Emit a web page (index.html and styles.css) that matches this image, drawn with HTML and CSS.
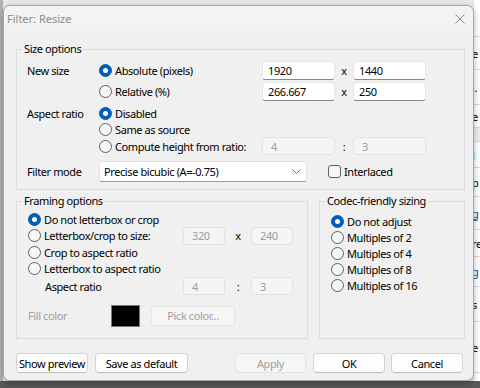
FILE: index.html
```html
<!DOCTYPE html>
<html lang="en">
<head>
    <meta charset="UTF-8">
    <meta name="viewport" content="width=device-width, initial-scale=1.0">
    <title>Filter: Resize</title>
    <link rel="stylesheet" href="styles.css">
</head>
<body>

    <div class="screen">
        <div class="desk">
            <div class="edge-left"></div>

            <div class="dialog">
                <div class="titlebar">
                    <span class="title">Filter: Resize</span>
                    <svg class="close" width="10" height="10" viewBox="0 0 10 10">
                        <path d="M0.5 0.5 L9.5 9.5 M9.5 0.5 L0.5 9.5" stroke="#8a8a8a" stroke-width="1" fill="none"/>
                    </svg>
                </div>

                <div class="body">
                    <!-- Size options -->
                    <fieldset class="group">
                        <legend>Size options</legend>
                        <div class="inner size-inner">
                            <div class="row h21">
                                <span class="label">New size</span>
                                <span class="opt"><span class="radio on"></span>Absolute (pixels)</span>
                                <span class="field">1920</span><span class="sep">x</span><span class="field">1440</span>
                            </div>
                            <div class="row h21">
                                <span class="label"></span>
                                <span class="opt"><span class="radio"></span>Relative (%)</span>
                                <span class="field">266.667</span><span class="sep">x</span><span class="field">250</span>
                            </div>
                            <div class="row h16 mt3">
                                <span class="label">Aspect ratio</span>
                                <span class="opt"><span class="radio on"></span>Disabled</span>
                            </div>
                            <div class="row h16">
                                <span class="label"></span>
                                <span class="opt"><span class="radio"></span>Same as source</span>
                            </div>
                            <div class="row h18">
                                <span class="label"></span>
                                <span class="opt"><span class="radio"></span>Compute height from ratio:</span>
                                <span class="field off short">4</span><span class="sep">:</span><span class="field off short">3</span>
                            </div>
                            <div class="row h23 mt5">
                                <span class="label">Filter mode</span>
                                <span class="select">Precise bicubic (A=-0.75)
                                    <svg width="9" height="5" viewBox="0 0 9 5"><path d="M0.5 0.5 L4.5 4.5 L8.5 0.5" stroke="#6b6b6b" fill="none"/></svg>
                                </span>
                                <span class="check-opt"><span class="checkbox"></span>Interlaced</span>
                            </div>
                        </div>
                    </fieldset>

                    <div class="lower">
                        <!-- Framing options -->
                        <fieldset class="group framing">
                            <legend>Framing options</legend>
                            <div class="inner framing-inner">
                                <div class="row h16">
                                    <span class="opt-f"><span class="radio on"></span>Do not letterbox or crop</span>
                                </div>
                                <div class="row h17">
                                    <span class="opt-f"><span class="radio"></span>Letterbox/crop to size:</span>
                                    <span class="field off small">320</span><span class="sep wide">x</span><span class="field off small">240</span>
                                </div>
                                <div class="row h16">
                                    <span class="opt-f"><span class="radio"></span>Crop to aspect ratio</span>
                                </div>
                                <div class="row h16">
                                    <span class="opt-f"><span class="radio"></span>Letterbox to aspect ratio</span>
                                </div>
                                <div class="row h18 mt1">
                                    <span class="sub-label">Aspect ratio</span>
                                    <span class="field off small">4</span><span class="sep wide">:</span><span class="field off small">3</span>
                                </div>
                                <div class="row h23 mt9">
                                    <span class="fill-label">Fill color</span>
                                    <span class="swatch"></span>
                                    <span class="btn off pick">Pick color...</span>
                                </div>
                            </div>
                        </fieldset>

                        <!-- Codec-friendly sizing -->
                        <fieldset class="group codec">
                            <legend>Codec-friendly sizing</legend>
                            <div class="inner codec-inner">
                                <div class="row h16"><span class="radio on"></span>Do not adjust</div>
                                <div class="row h16"><span class="radio"></span>Multiples of 2</div>
                                <div class="row h16"><span class="radio"></span>Multiples of 4</div>
                                <div class="row h16"><span class="radio"></span>Multiples of 8</div>
                                <div class="row h16"><span class="radio"></span>Multiples of 16</div>
                            </div>
                        </fieldset>
                    </div>

                    <div class="buttons">
                        <span class="btn w72">Show preview</span>
                        <span class="btn w93">Save as default</span>
                        <span class="btn off w71 push">Apply</span>
                        <span class="btn w72">OK</span>
                        <span class="btn w72">Cancel</span>
                    </div>
                </div>
            </div>

            <!-- Fenster im Hintergrund -->
            <div class="backwin">
                <div class="bw-row" style="height: 37px"></div>
                <div class="bw-row" style="height: 33px">e</div>
                <div class="bw-row" style="height: 35px">..</div>
                <div class="bw-row" style="height: 23px">e</div>
                <div class="bw-row band" style="height: 14px"></div>
                <div class="bw-row" style="height: 26px">J</div>
                <div class="bw-row" style="height: 29px">p</div>
                <div class="bw-row link" style="height: 33px">g</div>
                <div class="bw-row" style="height: 27px">re</div>
                <div class="bw-row link" style="height: 30px">g</div>
                <div class="bw-row" style="height: 35px">s</div>
                <div class="bw-row" style="height: 51px">e</div>
            </div>
        </div>
        <div class="taskbar"></div>
    </div>

</body>
</html>
```

FILE: styles.css
```css
* {
    box-sizing: border-box;
}

body {
    margin: 0;
    font-family: 'Noto Sans', 'Liberation Sans', sans-serif;
    font-size: 11px;
    letter-spacing: -0.4px;
    color: #000;
    background-color: #585858;
}

.screen {
    width: 480px;
    height: 388px;
    overflow: hidden;
    display: flex;
    flex-direction: column;
}

.desk {
    height: 381px;
    display: flex;
    background-color: #e9e9e9;
}

.edge-left {
    width: 3px;
    background-color: #b3b3b3;
}

/* Dialog */
.dialog {
    width: 471px;
    height: 376px;
    margin-top: 5px;
    background-color: #f0f0f0;
    border: 1px solid #a6a6a6;
    border-radius: 7px;
    display: flex;
    flex-direction: column;
    box-shadow: 0 2px 6px rgba(0, 0, 0, 0.3);
    position: relative;
    z-index: 1;
}

.titlebar {
    height: 25px;
    display: flex;
    align-items: center;
    justify-content: space-between;
    padding: 0 8px 0 3px;
    background-color: #f3f3f3;
    border-radius: 7px 7px 0 0;
    font-size: 11px;
    letter-spacing: 0;
    color: #8c8c8c;
}

.body {
    padding: 11px 8px 0 12px;
}

.group {
    margin: 0;
    padding: 0;
    min-width: 0;
    border: 1px solid #dcdcdc;
}

.group legend {
    margin-left: 5px;
    padding: 0 2px;
    line-height: 14px;
}

.inner {
    display: flex;
    flex-direction: column;
}

.size-inner {
    padding: 4px 0 6px 10px;
}

.row {
    display: flex;
    align-items: center;
    white-space: nowrap;
}

.h16 { height: 16px; }
.h17 { height: 17px; }
.h18 { height: 18px; }
.h21 { height: 21px; }
.h23 { height: 23px; }
.mt1 { margin-top: 1px; }
.mt3 { margin-top: 3px; }
.mt5 { margin-top: 5px; }
.mt9 { margin-top: 9px; }

.label {
    width: 72px;
}

.opt {
    width: 163px;
    display: flex;
    align-items: center;
}

.opt-f {
    width: 155px;
    display: flex;
    align-items: center;
}

/* Radio und Checkbox */
.radio {
    width: 13px;
    height: 13px;
    border-radius: 50%;
    border: 1px solid #5f5f5f;
    background-color: #f6f6f6;
    margin-right: 3px;
    flex-shrink: 0;
    display: flex;
    align-items: center;
    justify-content: center;
}

.radio.on {
    border-color: #005fb8;
    background-color: #005fb8;
}

.radio.on::after {
    content: '';
    width: 5px;
    height: 5px;
    border-radius: 50%;
    background-color: #fff;
}

.check-opt {
    display: flex;
    align-items: center;
    margin-left: 21px;
}

.checkbox {
    width: 13px;
    height: 13px;
    border: 1px solid #5f5f5f;
    border-radius: 3px;
    background-color: #f6f6f6;
    margin-right: 3px;
}

/* Eingabefelder */
.field {
    width: 73px;
    height: 19px;
    display: flex;
    align-items: center;
    padding-left: 5px;
    background-color: #fff;
    border: 1px solid #e6e6e6;
    border-bottom-color: #8a8a8a;
    border-radius: 3px;
}

.field.short {
    height: 18px;
}

.field.small {
    width: 42px;
    height: 18px;
}

.field.off {
    background-color: #f5f5f5;
    border-color: #e2e2e2;
    color: #9c9c9c;
    padding-left: 8px;
}

.sep {
    width: 18px;
    text-align: center;
}

.sep.wide {
    width: 26px;
}

.select {
    width: 208px;
    height: 21px;
    display: flex;
    align-items: center;
    justify-content: space-between;
    padding: 0 5px 0 4px;
    background-color: #fff;
    border: 1px solid #e2e2e2;
    border-bottom-color: #9a9a9a;
    border-radius: 3px;
}

/* Untere Gruppen */
.lower {
    display: flex;
    gap: 11px;
    margin-top: 4px;
}

.framing {
    width: 292px;
}

.codec {
    width: 146px;
}

.framing-inner {
    padding: 3px 0 11px 11px;
}

.codec-inner {
    padding: 5px 0 0 11px;
}

.sub-label {
    width: 138px;
    margin-left: 17px;
}

.fill-label {
    width: 83px;
    color: #a0a0a0;
}

.swatch {
    width: 29px;
    height: 22px;
    background-color: #000;
    border: 1px solid #7a7a7a;
    margin-right: 11px;
}

/* Buttons */
.btn {
    height: 20px;
    display: flex;
    align-items: center;
    justify-content: center;
    background-color: #fdfdfd;
    border: 1px solid #d3d3d3;
    border-bottom-color: #bdbdbd;
    border-radius: 4px;
    white-space: nowrap;
}

.btn.off {
    background-color: #f6f6f6;
    border-color: #e3e3e3;
    color: #a0a0a0;
}

.pick {
    width: 84px;
}

.buttons {
    display: flex;
    margin-top: 14px;
    padding-right: 2px;
}

.w72 { width: 72px; }
.w93 { width: 93px; }
.w71 { width: 71px; }

.buttons .btn + .btn {
    margin-left: 7px;
}

.buttons .btn:last-child {
    margin-left: 6px;
}

.buttons .push {
    margin-left: auto !important;
}

/* Hintergrundfenster rechts */
.backwin {
    width: 6px;
    background-color: #fff;
    overflow: hidden;
    display: flex;
    flex-direction: column;
}

.bw-row {
    flex-shrink: 0;
    display: flex;
    align-items: center;
    margin-left: -2px;
    border-bottom: 1px solid #dadada;
    font-size: 11px;
    white-space: nowrap;
}

.bw-row.band {
    background-color: #eeeeee;
}

.bw-row.link {
    color: #0a4fa8;
    text-decoration: underline;
}

.taskbar {
    height: 7px;
    background-color: #585858;
}
```
